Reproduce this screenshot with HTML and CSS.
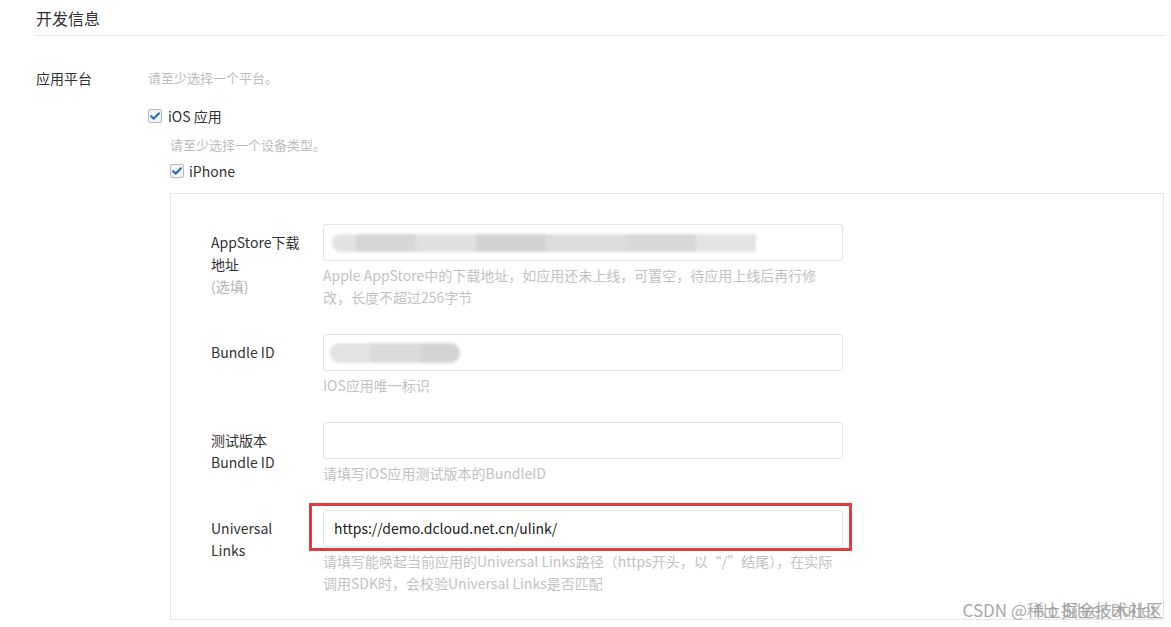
FILE: index.html
```html
<!DOCTYPE html>
<html lang="zh-CN">
<head>
<meta charset="utf-8">
<title>开发信息</title>
<link rel="stylesheet" href="styles.css">
</head>
<body>
<div class="page">
  <div class="section-title">开发信息</div>

  <div class="form-row">
    <div class="row-label">应用平台</div>
    <div class="row-body">
      <div class="hint">请至少选择一个平台。</div>
      <label class="check check-ios">
        <span class="box"><svg viewBox="0 0 14 14" width="14" height="14"><path d="M3.2 7.2 L5.8 9.6 L10.8 4.4" fill="none" stroke="#1f6fbf" stroke-width="2.2" stroke-linecap="round" stroke-linejoin="round"/></svg></span>
        <span>iOS 应用</span>
      </label>
      <div class="indent">
        <div class="hint hint-device">请至少选择一个设备类型。</div>
        <label class="check check-iphone">
          <span class="box"><svg viewBox="0 0 14 14" width="14" height="14"><path d="M3.2 7.2 L5.8 9.6 L10.8 4.4" fill="none" stroke="#1f6fbf" stroke-width="2.2" stroke-linecap="round" stroke-linejoin="round"/></svg></span>
          <span>iPhone</span>
        </label>

        <div class="panel">
          <div class="field">
            <div class="field-label">AppStore下载<br>地址<br><span class="optional">(选填)</span></div>
            <div class="field-main">
              <div class="input">
                <div class="blur blur-a">
                  <span class="b b1"></span><span class="b b2"></span><span class="b b3"></span><span class="b b4"></span><span class="b b5"></span><span class="b b6"></span><span class="b b7"></span>
                </div>
              </div>
              <div class="help">Apple AppStore中的下载地址，如应用还未上线，可置空，待应用上线后再行修<br>改，长度不超过256字节</div>
            </div>
          </div>

          <div class="field">
            <div class="field-label">Bundle ID</div>
            <div class="field-main">
              <div class="input">
                <div class="blur blur-b">
                  <span class="b c1"></span><span class="b c2"></span><span class="b c3"></span>
                </div>
              </div>
              <div class="help">IOS应用唯一标识</div>
            </div>
          </div>

          <div class="field">
            <div class="field-label">测试版本<br>Bundle ID</div>
            <div class="field-main">
              <div class="input"></div>
              <div class="help">请填写iOS应用测试版本的BundleID</div>
            </div>
          </div>

          <div class="field">
            <div class="field-label">Universal<br>Links</div>
            <div class="field-main">
              <div class="input-wrap">
                <div class="input input-text">https://demo.dcloud.net.cn/ulink/</div>
                <div class="highlight"></div>
              </div>
              <div class="help">请填写能唤起当前应用的Universal Links路径（https开头，以“/”结尾），在实际<br>调用SDK时，会校验Universal Links是否匹配</div>
            </div>
          </div>
        </div>
      </div>
    </div>
  </div>

  <div class="watermark"><span class="wm-a">CSDN @稀土掘金技术社区</span><span class="wm-b">No Silver Bullet</span></div>
</div>
</body>
</html>
```

FILE: styles.css
```css
* { box-sizing: border-box; }

html, body {
  margin: 0;
  padding: 0;
  background: #fff;
}

body {
  font-family: "Noto Sans CJK SC", "Noto Sans", "Liberation Sans", sans-serif;
  font-size: 14px;
  color: #333;
  width: 1171px;
  height: 627px;
  overflow: hidden;
}

.page {
  position: relative;
  padding: 0 7px 0 36px;
  height: 627px;
}

.section-title {
  font-size: 16px;
  line-height: 20px;
  padding: 8px 0 7px;
  border-bottom: 1px solid #e8e8e8;
  color: #333;
}

.form-row {
  display: flex;
  margin-top: 32px;
}

.row-label {
  width: 112px;
  flex: none;
  line-height: 20px;
  color: #333;
}

.row-body {
  flex: 1;
  display: flex;
  flex-direction: column;
}

.hint {
  line-height: 20px;
  font-size: 13px;
  color: #bdbdbd;
}

.check {
  display: flex;
  align-items: center;
  gap: 6px;
  line-height: 20px;
  color: #333;
}

.check-ios { margin-top: 18px; }

.box {
  width: 14px;
  height: 14px;
  border: 1px solid #b9b9b9;
  border-radius: 2px;
  background: #f3f3f3;
  display: flex;
  align-items: center;
  justify-content: center;
  overflow: hidden;
}

.box svg { display: block; flex: none; }

.indent {
  margin-left: 22px;
  display: flex;
  flex-direction: column;
}

.hint-device { margin-top: 9px; }

.check-iphone { margin-top: 6px; gap: 5px; }

.panel {
  margin-top: 12px;
  border: 1px solid #e6e6e6;
  padding: 30px 0 25px 40px;
  display: flex;
  flex-direction: column;
  gap: 26px;
}

.field {
  display: flex;
}

.field-label {
  width: 112px;
  flex: none;
  padding-top: 7px;
  line-height: 22px;
  color: #333;
}

.optional { color: #b5b5b5; }

.field-main {
  width: 520px;
  display: flex;
  flex-direction: column;
}

.input {
  height: 37px;
  border: 1px solid #e3e3e3;
  border-radius: 3px;
  background: #fff;
  position: relative;
  overflow: hidden;
}

.input-text {
  padding-left: 10px;
  line-height: 35px;
  color: #222;
}

.input-wrap { position: relative; }

.highlight {
  position: absolute;
  left: -14px;
  right: -9px;
  top: -7px;
  bottom: -4px;
  border: 3px solid #e33b3b;
  pointer-events: none;
}

.help {
  margin-top: 3px;
  line-height: 22px;
  color: #c2c2c2;
  white-space: nowrap;
}

.blur {
  position: absolute;
  top: 9px;
  left: 8px;
  height: 18px;
  display: flex;
  filter: blur(1.5px);
}

.b { display: block; height: 18px; }

.blur-a .b1 { width: 24px; background: #e2e2e2; border-radius: 9px 0 0 9px; }
.blur-a .b2 { width: 60px; background: #d6d6d6; }
.blur-a .b3 { width: 60px; background: #e0e0e0; }
.blur-a .b4 { width: 70px; background: #d2d2d2; }
.blur-a .b5 { width: 80px; background: #dcdcdc; }
.blur-a .b6 { width: 70px; background: #d8d8d8; }
.blur-a .b7 { width: 60px; background: #e4e4e4; }

.blur-b { top: 8px; left: 6px; height: 20px; }
.blur-b .b { height: 20px; }
.blur-b .c1 { width: 40px; background: #e3e3e3; border-radius: 9px 0 0 9px; }
.blur-b .c2 { width: 50px; background: #dadada; }
.blur-b .c3 { width: 40px; background: #d4d4d4; border-radius: 0 9px 9px 0; }

.watermark {
  position: absolute;
  right: 8px;
  bottom: 6px;
  font-size: 17px;
  line-height: 22px;
  color: #a8a8a8;
  white-space: nowrap;
}

.wm-b {
  position: absolute;
  right: 6px;
  top: 0;
  color: rgba(150,150,150,0.7);
}
```
